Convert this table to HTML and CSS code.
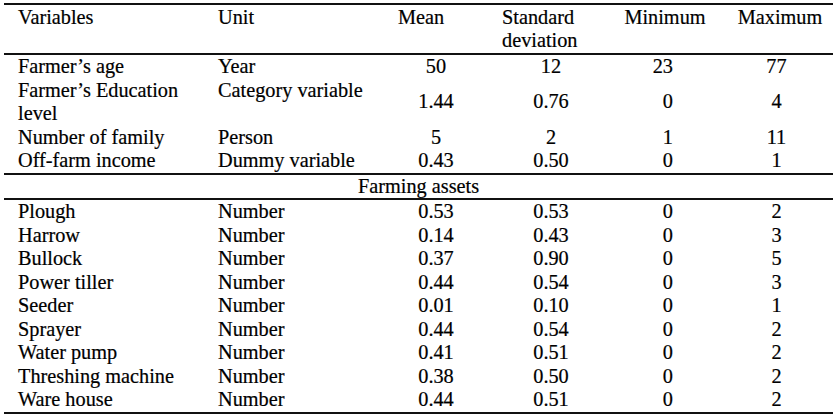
FILE: index.html
```html
<!DOCTYPE html>
<html lang="en">
<head>
<meta charset="utf-8">
<title>Descriptive statistics</title>
<link rel="stylesheet" href="styles.css">
</head>
<body>
<table class="stats">
  <colgroup>
    <col class="c-var"><col class="c-unit"><col class="c-mean"><col class="c-sd"><col class="c-min"><col class="c-max">
  </colgroup>
  <thead>
    <tr class="head">
      <th class="var">Variables</th>
      <th class="unit">Unit</th>
      <th class="mean">Mean</th>
      <th class="sd">Standard<br>deviation</th>
      <th class="min">Minimum</th>
      <th class="max">Maximum</th>
    </tr>
  </thead>
  <tbody>
    <tr>
      <td class="var">Farmer’s age</td><td class="unit">Year</td>
      <td class="mean">50</td><td class="sd">12</td><td class="min">23</td><td class="max">77</td>
    </tr>
    <tr class="two">
      <td class="var">Farmer’s Education<br>level</td><td class="unit">Category variable</td>
      <td class="mean">1.44</td><td class="sd">0.76</td><td class="min">0</td><td class="max">4</td>
    </tr>
    <tr>
      <td class="var">Number of family</td><td class="unit">Person</td>
      <td class="mean">5</td><td class="sd">2</td><td class="min">1</td><td class="max">11</td>
    </tr>
    <tr class="last">
      <td class="var">Off-farm income</td><td class="unit">Dummy variable</td>
      <td class="mean">0.43</td><td class="sd">0.50</td><td class="min">0</td><td class="max">1</td>
    </tr>
    <tr class="section">
      <td colspan="6">Farming assets</td>
    </tr>
    <tr>
      <td class="var">Plough</td><td class="unit">Number</td>
      <td class="mean">0.53</td><td class="sd">0.53</td><td class="min">0</td><td class="max">2</td>
    </tr>
    <tr>
      <td class="var">Harrow</td><td class="unit">Number</td>
      <td class="mean">0.14</td><td class="sd">0.43</td><td class="min">0</td><td class="max">3</td>
    </tr>
    <tr>
      <td class="var">Bullock</td><td class="unit">Number</td>
      <td class="mean">0.37</td><td class="sd">0.90</td><td class="min">0</td><td class="max">5</td>
    </tr>
    <tr>
      <td class="var">Power tiller</td><td class="unit">Number</td>
      <td class="mean">0.44</td><td class="sd">0.54</td><td class="min">0</td><td class="max">3</td>
    </tr>
    <tr>
      <td class="var">Seeder</td><td class="unit">Number</td>
      <td class="mean">0.01</td><td class="sd">0.10</td><td class="min">0</td><td class="max">1</td>
    </tr>
    <tr>
      <td class="var">Sprayer</td><td class="unit">Number</td>
      <td class="mean">0.44</td><td class="sd">0.54</td><td class="min">0</td><td class="max">2</td>
    </tr>
    <tr>
      <td class="var">Water pump</td><td class="unit">Number</td>
      <td class="mean">0.41</td><td class="sd">0.51</td><td class="min">0</td><td class="max">2</td>
    </tr>
    <tr>
      <td class="var">Threshing machine</td><td class="unit">Number</td>
      <td class="mean">0.38</td><td class="sd">0.50</td><td class="min">0</td><td class="max">2</td>
    </tr>
    <tr class="last">
      <td class="var">Ware house</td><td class="unit">Number</td>
      <td class="mean">0.44</td><td class="sd">0.51</td><td class="min">0</td><td class="max">2</td>
    </tr>
  </tbody>
</table>
</body>
</html>
```

FILE: styles.css
```css
html, body {
  margin: 0;
  padding: 0;
  background: #fff;
}

body {
  padding: 3px 0 0 4px;
  font-family: "Liberation Serif", "Times New Roman", serif;
  font-size: 20.3px;
  color: #000;
}

.stats {
  width: 829px;
  table-layout: fixed;
  border-collapse: separate;
  border-spacing: 0;
  border-top: 2px solid #111;
  font-family: "Liberation Serif", "Times New Roman", serif;
  -webkit-text-stroke: 0.2px #000;
}

.c-var  { width: 214px; }
.c-unit { width: 172px; }
.c-mean { width: 92px; }
.c-sd   { width: 138px; }
.c-min  { width: 100px; }
.c-max  { width: 113px; }

.stats th,
.stats td {
  padding: 0;
  font-weight: normal;
  line-height: 23.5px;
  vertical-align: middle;
  white-space: nowrap;
}

.stats .var  { padding-left: 14px; text-align: left; }
.stats .unit { text-align: left; }
.stats .mean { text-align: center; }
.stats .sd   { text-align: center; }
.stats .min  { text-align: right; padding-right: 47px; }
.stats .max  { text-align: center; }

/* header row */
.head th {
  line-height: 22.5px;
  vertical-align: top;
  padding-top: 1px;
  padding-bottom: 2px;
  border-bottom: 2px solid #111;
}
.head th.mean { padding-right: 30px; }
.head th.sd   { text-align: left; padding-left: 20px; }
.head th.min  { text-align: center; padding-right: 10px; }
.head th.max  { padding-left: 7px; }

/* two-line row: text columns top, numbers centred */
.two .var,
.two .unit { vertical-align: top; }

.last td { border-bottom: 2px solid #111; }

.section td {
  text-align: center;
  border-bottom: 2px solid #111;
}
```
